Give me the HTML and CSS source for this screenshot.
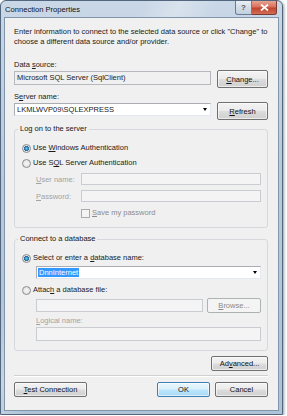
FILE: index.html
```html
<!DOCTYPE html>
<html lang="en">
<head>
    <meta charset="UTF-8">
    <title>Connection Properties</title>
    <link rel="stylesheet" href="styles.css">
</head>
<body>
    <div class="window">
        <div class="titlebar">
            <span class="title">Connection Properties</span>
            <div class="caption">
                <span class="cap help">?</span>
                <span class="cap close">
                    <svg width="9" height="7" viewBox="0 0 9 7"><path d="M1 0.5 L8 6.5 M8 0.5 L1 6.5" stroke="#fff" stroke-width="1.8"/></svg>
                </span>
            </div>
        </div>
        <div class="client">
            <p class="intro">Enter information to connect to the selected data source or click "Change" to<br>choose a different data source and/or provider.</p>

            <div class="label first">Data <u>s</u>ource:</div>
            <div class="row tall-row">
                <div class="box readonly wide">Microsoft SQL Server (SqlClient)</div>
                <div class="btn tall"><span><u>C</u>hange...</span></div>
            </div>

            <div class="label">S<u>e</u>rver name:</div>
            <div class="row tall-row">
                <div class="box wide combo">LKMLWVP09\SQLEXPRESS<span class="arrow"></span></div>
                <div class="btn tall"><span><u>R</u>efresh</span></div>
            </div>

            <fieldset class="group logon">
                <legend>Log on to the server</legend>
                <div class="option first-opt"><span class="radio on"></span><span>Use <u>W</u>indows Authentication</span></div>
                <div class="option second-opt"><span class="radio"></span><span>Use S<u>Q</u>L Server Authentication</span></div>
                <div class="cred">
                    <span class="cred-label"><u>U</u>ser name:</span>
                    <div class="box disabled cred-box"></div>
                </div>
                <div class="cred">
                    <span class="cred-label"><u>P</u>assword:</span>
                    <div class="box disabled cred-box"></div>
                </div>
                <div class="save"><span class="check"></span><span><u>S</u>ave my password</span></div>
            </fieldset>

            <fieldset class="group database">
                <legend>Connect to a database</legend>
                <div class="option first-opt"><span class="radio on"></span><span>Select or enter a <u>d</u>atabase name:</span></div>
                <div class="box combo db-combo"><span class="selected">DnnInternet</span><span class="arrow"></span></div>
                <div class="option attach-opt"><span class="radio"></span><span>Attac<u>h</u> a database file:</span></div>
                <div class="file-row">
                    <div class="box disabled file-box"></div>
                    <div class="btn disabled browse"><span><u>B</u>rowse...</span></div>
                </div>
                <div class="logical"><u>L</u>ogical name:</div>
                <div class="box disabled logical-box"></div>
            </fieldset>

            <div class="advanced-row">
                <div class="btn advanced"><span>Ad<u>v</u>anced...</span></div>
            </div>
            <div class="separator"></div>
            <div class="footer">
                <div class="btn test"><span><u>T</u>est Connection</span></div>
                <div class="footer-right">
                    <div class="btn default">OK</div>
                    <div class="btn">Cancel</div>
                </div>
            </div>
        </div>
    </div>
</body>
</html>
```

FILE: styles.css
```css
* { box-sizing: border-box; }
body { margin: 0; background: #ffffff; font-family: "Liberation Sans", Arial, sans-serif; font-size: 7.5px; color: #1a1a1a; }
u { text-decoration: underline; text-underline-offset: 1px; }

.window {
    width: 283px; height: 415px; display: flex; flex-direction: column;
    border: 1px solid #52677e; border-radius: 6px 6px 0 0; padding: 0 3px 3px 3px;
    background:
        linear-gradient(115deg, rgba(255,255,255,0) 30%, rgba(255,255,255,0.3) 38%, rgba(255,255,255,0) 46%),
        linear-gradient(180deg, #c9d7e6 0%, #b8cbde 40%, #aec2d8 100%);
    box-shadow: 1px 1px 3px rgba(0, 0, 0, 0.4);
}
.titlebar { height: 16px; display: flex; justify-content: space-between; align-items: flex-start; }
.title { font-size: 7.6px; color: #111; margin: 4px 0 0 1px; line-height: 9px; }
.caption { display: flex; margin-right: 2px; }
.cap { height: 14px; display: flex; align-items: center; justify-content: center; border: 1px solid #6b7d92; border-top: none; }
.help {
    width: 17px; border-radius: 0 0 0 3px; color: #555; font-size: 8px; font-weight: bold;
    background: linear-gradient(180deg, #e9eff5 0%, #d3dde8 50%, #c2d0de 100%);
}
.close {
    width: 25px; border-left: none; border-radius: 0 0 3px 0; border-color: #7a3b33;
    background: linear-gradient(180deg, #e8a493 0%, #d8705c 45%, #c1442e 55%, #d26e55 100%);
}

.client {
    flex: 1; background: #f0f0f0; border: 1px solid #8195ab;
    padding: 9px 10px 0 9px;
}
.intro { margin: 0; line-height: 10px; white-space: nowrap; }
.label { line-height: 10px; margin-top: 4px; }
.label.first { margin-top: 13px; }
.row { display: flex; justify-content: space-between; align-items: flex-start; }
.tall-row { height: 18px; }

.box {
    height: 13px; background: #ffffff; border: 1px solid #abadb3; border-right-color: #e3e9ef; border-bottom-color: #e3e9ef;
    line-height: 11px; padding-left: 2px; position: relative; white-space: nowrap;
}
.wide { width: 197px; margin-top: 1px; }
.readonly { background: #f0f0f0; height: 14px; line-height: 12px; border-color: #b5b9bd; }
.disabled { background: #f4f4f4; border-color: #c9cdd2; }
.combo .arrow {
    position: absolute; right: 3px; top: 4px; width: 0; height: 0;
    border-left: 2.5px solid transparent; border-right: 2.5px solid transparent; border-top: 3px solid #000;
}

.btn {
    width: 53px; height: 15px; display: flex; align-items: center; justify-content: center;
    border: 1px solid #707070; border-radius: 2px; color: #111; white-space: nowrap;
    background: linear-gradient(180deg, #f3f3f3 0%, #ebebeb 49%, #dddddd 51%, #cfcfcf 100%);
    box-shadow: inset 0 0 0 1px rgba(255, 255, 255, 0.6);
}
.btn.tall { width: 51px; height: 18px; }
.btn.disabled { border-color: #adb2b5; color: #8a8a8a; background: #f4f4f4; box-shadow: none; }
.btn.default {
    border-color: #3c7fb1;
    background: linear-gradient(180deg, #eaf6fd 0%, #d9f0fc 49%, #bee6fd 51%, #a7d9f5 100%);
}

.group { margin: 4px 0 0 0; padding: 0 6px 9px 7px; border: 1px solid #d5d8dc; border-radius: 3px; min-width: 0; }
.group legend { padding: 0 2px; margin-left: -4px; line-height: 10px; color: #151515; }
.database { margin-top: 6px; }

.option { display: flex; align-items: center; line-height: 10px; }
.first-opt { margin-top: 9px; }
.second-opt { margin-top: 5px; }
.attach-opt { margin-top: 6px; }
.radio {
    width: 9px; height: 9px; border-radius: 50%; margin-right: 2px; flex: none;
    border: 1px solid #8a8c8e; background: radial-gradient(circle, #f6f6f6 0%, #dcdcdc 100%);
}
.radio.on { background: radial-gradient(circle, #5fd0f0 0%, #2c7fb8 38%, #2c5e8e 48%, #e6e6e6 58%, #dcdcdc 100%); }

.cred { display: flex; align-items: center; margin-top: 5px; }
.cred-label { width: 45px; margin-left: 14px; color: #a3a3a3; }
.cred-box { width: 180px; height: 12px; }
.save { display: flex; align-items: center; margin: 6px 0 0 59px; line-height: 10px; color: #8c8c8c; }
.check { width: 9px; height: 9px; margin-right: 2px; border: 1px solid #a8abad; background: #f4f4f4; }

.db-combo { width: 225px; margin: 3px 0 0 14px; }
.selected { background: #3399ff; color: #ffffff; padding: 0 1px; margin-left: -1px; }
.file-row { display: flex; justify-content: space-between; margin: 3px 0 0 14px; width: 225px; height: 15px; }
.file-box { width: 167px; margin-top: 1px; }
.browse { width: 54px; }
.logical { margin: 3px 0 0 14px; line-height: 10px; color: #a3a3a3; }
.logical-box { width: 225px; height: 14px; margin: 1px 0 0 14px; }

.advanced-row { display: flex; justify-content: flex-end; margin-top: 5px; }
.advanced { width: 57px; }
.separator { height: 2px; margin-top: 4px; border-top: 1px solid #d0d0d0; border-bottom: 1px solid #ffffff; }
.footer { display: flex; justify-content: space-between; margin-top: 5px; }
.test { width: 73px; }
.footer-right { display: flex; gap: 5px; }
```
